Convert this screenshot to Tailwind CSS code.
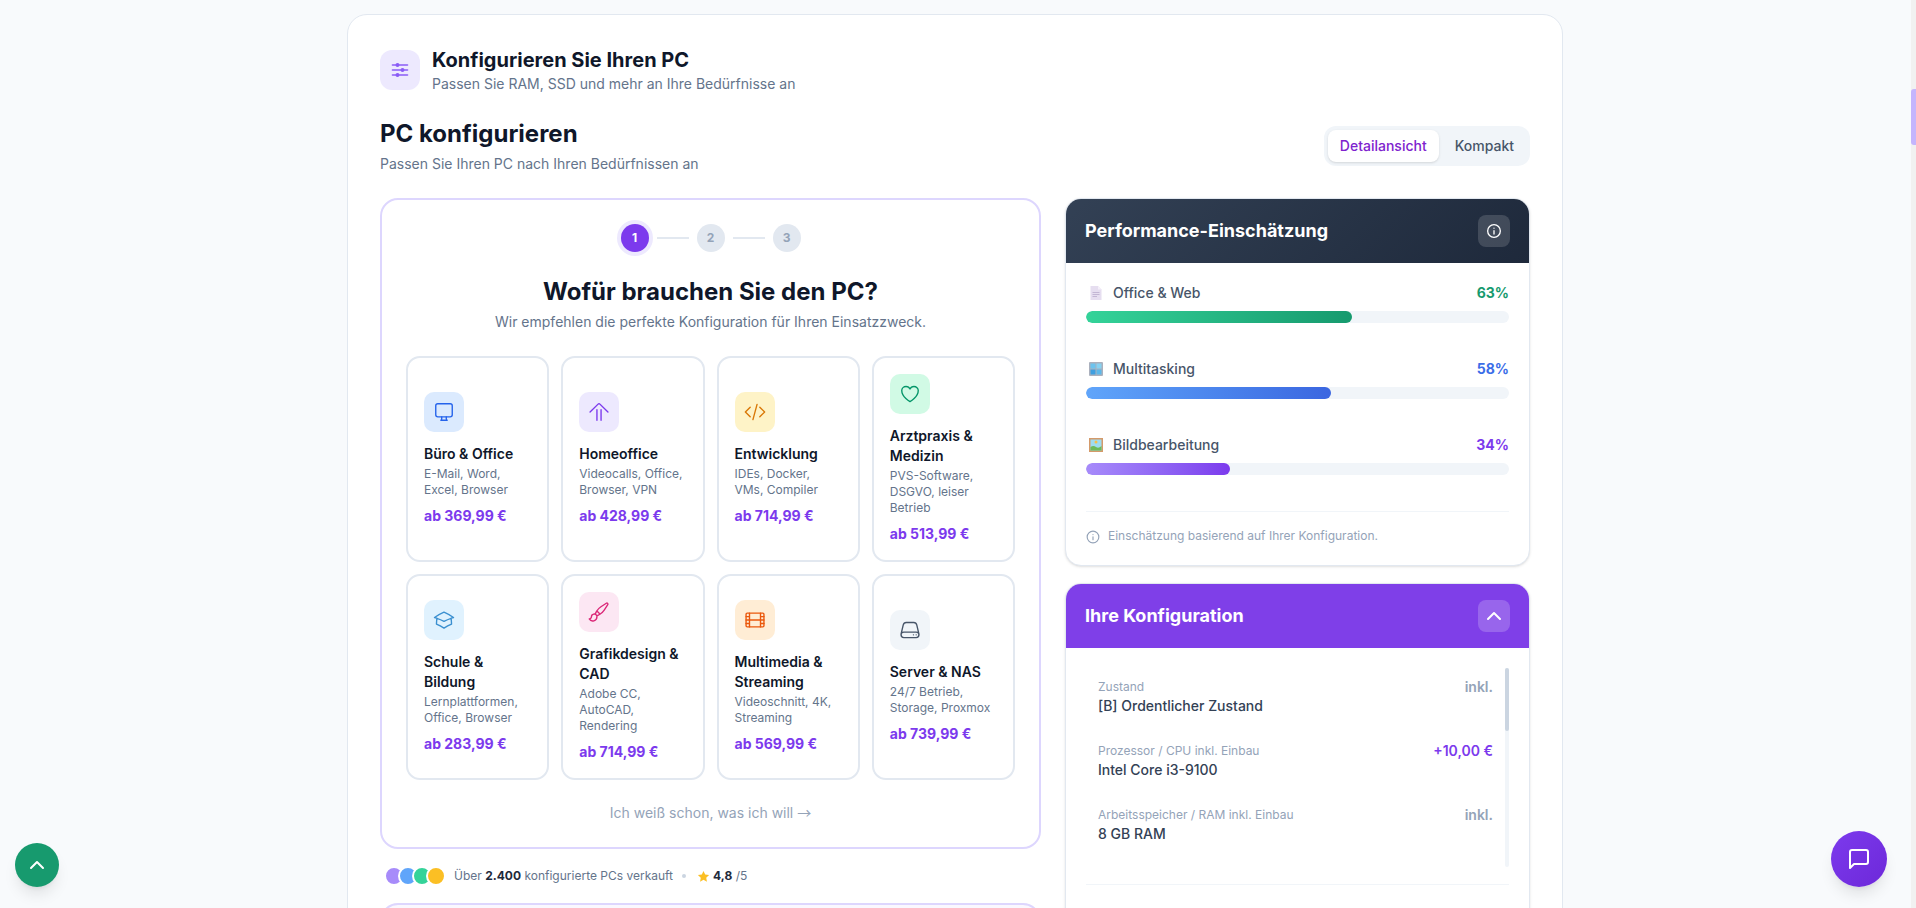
<!DOCTYPE html>
<html lang="de">
<head>
  <meta charset="UTF-8">
  <meta name="viewport" content="width=device-width, initial-scale=1.0">
  <title>PC konfigurieren</title>
  <script src="https://cdn.jsdelivr.net/npm/@tailwindcss/browser@4"></script>
</head>
<body class="bg-[#f8fafc] font-['Inter',sans-serif] text-[#0f172a] h-[908px] overflow-hidden flex">
  <main class="flex-1 min-w-0 h-[908px] overflow-hidden">
    <div class="w-[1216px] ml-[347px] mt-[14px] bg-white border border-[#e2e8f0] rounded-[20px] px-8 pt-8 pb-8">

      <!-- Page header -->
      <div class="flex items-center gap-3 -mt-px">
        <div class="w-10 h-10 rounded-xl bg-[#ede9fe] flex items-center justify-center">
          <svg class="w-5 h-5 text-[#8b5cf6]" viewBox="0 0 24 24" fill="currentColor" stroke="currentColor" stroke-width="2" stroke-linecap="round"><path fill="none" d="M3 6h18M3 12h18M3 18h18"/><circle cx="9" cy="6" r="1.400"/><circle cx="15" cy="12" r="1.400"/><circle cx="9" cy="18" r="1.400"/></svg>
        </div>
        <div>
          <h2 class="text-xl leading-7 font-bold">Konfigurieren Sie Ihren PC</h2>
          <p class="text-sm text-[#64748b]">Passen Sie RAM, SSD und mehr an Ihre Bedürfnisse an</p>
        </div>
      </div>

      <div class="flex items-center justify-between mt-6 mb-6">
        <div>
          <h1 class="text-2xl font-bold">PC konfigurieren</h1>
          <p class="text-sm text-[#64748b] mt-1">Passen Sie Ihren PC nach Ihren Bedürfnissen an</p>
        </div>
        <div class="flex gap-1 p-1 bg-[#f1f5f9] rounded-xl">
          <button class="h-8 px-3 bg-white rounded-lg shadow-sm text-sm font-medium text-[#7e22ce]">Detailansicht</button>
          <button class="h-8 px-3 text-sm font-medium text-[#475569]">Kompakt</button>
        </div>
      </div>

      <div class="flex gap-6 items-start">
        <!-- Left column -->
        <div class="w-[661px] shrink-0">
          <div class="border-2 border-[#ddd6fe] rounded-[18px] bg-white px-6 pt-6 pb-6">
            <div class="flex items-center justify-center gap-2">
              <span class="w-7 h-7 rounded-full bg-[#7c3aed] ring-4 ring-[#ede9fe] text-white text-xs font-bold flex items-center justify-center">1</span>
              <span class="w-8 h-0.5 bg-[#e2e8f0]"></span>
              <span class="w-7 h-7 rounded-full bg-[#e2e8f0] text-[#94a3b8] text-xs font-bold flex items-center justify-center">2</span>
              <span class="w-8 h-0.5 bg-[#e2e8f0]"></span>
              <span class="w-7 h-7 rounded-full bg-[#e2e8f0] text-[#94a3b8] text-xs font-bold flex items-center justify-center">3</span>
            </div>
            <h2 class="text-2xl font-bold text-center mt-6">Wofür brauchen Sie den PC?</h2>
            <p class="text-sm text-[#64748b] text-center mt-1">Wir empfehlen die perfekte Konfiguration für Ihren Einsatzzweck.</p>

            <div class="grid grid-cols-4 gap-3 mt-6">
              <div class="border-2 border-[#e2e8f0] rounded-[14px] p-4 flex flex-col justify-center">
                <div class="w-10 h-10 rounded-[10px] bg-[#dbeafe] flex items-center justify-center mb-3">
                  <svg class="w-[22px] h-[22px] text-[#2563eb]" viewBox="0 0 24 24" fill="none" stroke="currentColor" stroke-width="1.5" stroke-linecap="round" stroke-linejoin="round"><rect x="3" y="3" width="18" height="14.250" rx="2.250"/><path d="M9.500 17.250v2a2 2 0 0 1-1 1.750h7a2 2 0 0 1-1-1.750v-2"/></svg>
                </div>
                <h3 class="text-sm font-semibold">Büro &amp; Office</h3>
                <p class="text-xs text-[#64748b] mt-0.5">E-Mail, Word, Excel, Browser</p>
                <p class="text-sm font-bold text-[#7c3aed] mt-2">ab 369,99 €</p>
              </div>

              <div class="border-2 border-[#e2e8f0] rounded-[14px] p-4 flex flex-col justify-center">
                <div class="w-10 h-10 rounded-[10px] bg-[#ede9fe] flex items-center justify-center mb-3">
                  <svg class="w-[22px] h-[22px] text-[#7c3aed]" viewBox="0 0 24 24" fill="none" stroke="currentColor" stroke-width="1.5" stroke-linecap="round" stroke-linejoin="round"><path d="M2.250 12 11 3.400a1.400 1.400 0 0 1 2 0L21.750 12M9.750 21V9.500M14.250 21V9.500"/></svg>
                </div>
                <h3 class="text-sm font-semibold">Homeoffice</h3>
                <p class="text-xs text-[#64748b] mt-0.5">Videocalls, Office, Browser, VPN</p>
                <p class="text-sm font-bold text-[#7c3aed] mt-2">ab 428,99 €</p>
              </div>

              <div class="border-2 border-[#e2e8f0] rounded-[14px] p-4 flex flex-col justify-center">
                <div class="w-10 h-10 rounded-[10px] bg-[#fef3c7] flex items-center justify-center mb-3">
                  <svg class="w-[22px] h-[22px] text-[#d97706]" viewBox="0 0 24 24" fill="none" stroke="currentColor" stroke-width="1.5" stroke-linecap="round" stroke-linejoin="round"><path d="M17.250 6.750 22.500 12l-5.250 5.250m-10.500 0L1.500 12l5.250-5.250m7.500-3-4.500 16.500"/></svg>
                </div>
                <h3 class="text-sm font-semibold">Entwicklung</h3>
                <p class="text-xs text-[#64748b] mt-0.5">IDEs, Docker, VMs, Compiler</p>
                <p class="text-sm font-bold text-[#7c3aed] mt-2">ab 714,99 €</p>
              </div>

              <div class="border-2 border-[#e2e8f0] rounded-[14px] p-4 flex flex-col justify-center">
                <div class="w-10 h-10 rounded-[10px] bg-[#d1fae5] flex items-center justify-center mb-3">
                  <svg class="w-[22px] h-[22px] text-[#059669]" viewBox="0 0 24 24" fill="none" stroke="currentColor" stroke-width="1.5" stroke-linecap="round" stroke-linejoin="round"><path d="M21 8.250c0-2.485-2.099-4.500-4.688-4.500-1.935 0-3.597 1.126-4.312 2.733-.715-1.607-2.377-2.733-4.313-2.733C5.100 3.750 3 5.765 3 8.250c0 7.220 9 12 9 12s9-4.780 9-12Z"/></svg>
                </div>
                <h3 class="text-sm font-semibold">Arztpraxis &amp; Medizin</h3>
                <p class="text-xs text-[#64748b] mt-0.5">PVS-Software, DSGVO, leiser Betrieb</p>
                <p class="text-sm font-bold text-[#7c3aed] mt-2">ab 513,99 €</p>
              </div>

              <div class="border-2 border-[#e2e8f0] rounded-[14px] p-4 flex flex-col justify-center">
                <div class="w-10 h-10 rounded-[10px] bg-[#e0f2fe] flex items-center justify-center mb-3">
                  <svg class="w-[22px] h-[22px] text-[#3b90d0]" viewBox="0 0 24 24" fill="none" stroke="currentColor" stroke-width="1.5" stroke-linecap="round" stroke-linejoin="round"><path d="M4.260 10.147a60.438 60.438 0 0 0-.491 6.347A48.620 48.620 0 0 1 12 20.904a48.620 48.620 0 0 1 8.232-4.410 60.460 60.460 0 0 0-.491-6.347m-15.482 0a50.636 50.636 0 0 0-2.658-.813A59.906 59.906 0 0 1 12 3.493a59.903 59.903 0 0 1 10.399 5.840c-.896.248-1.783.520-2.658.814m-15.482 0A50.717 50.717 0 0 1 12 13.489a50.702 50.702 0 0 1 7.740-3.342"/></svg>
                </div>
                <h3 class="text-sm font-semibold">Schule &amp; Bildung</h3>
                <p class="text-xs text-[#64748b] mt-0.5">Lernplattformen, Office, Browser</p>
                <p class="text-sm font-bold text-[#7c3aed] mt-2">ab 283,99 €</p>
              </div>

              <div class="border-2 border-[#e2e8f0] rounded-[14px] p-4 flex flex-col justify-center">
                <div class="w-10 h-10 rounded-[10px] bg-[#fce7f3] flex items-center justify-center mb-3">
                  <svg class="w-[22px] h-[22px] text-[#db2777]" viewBox="0 0 24 24" fill="none" stroke="currentColor" stroke-width="1.5" stroke-linecap="round" stroke-linejoin="round"><path d="M9.530 16.122a3 3 0 0 0-5.780 1.128 2.250 2.250 0 0 1-2.400 2.245 4.500 4.500 0 0 0 8.400-2.245c0-.399-.078-.780-.220-1.128Zm0 0a15.998 15.998 0 0 0 3.388-1.620m-5.043-.025a15.994 15.994 0 0 1 1.622-3.395m3.420 3.420a15.995 15.995 0 0 0 4.764-4.648l3.876-5.814a1.151 1.151 0 0 0-1.597-1.597L14.146 6.320a15.996 15.996 0 0 0-4.649 4.763m3.420 3.420a6.776 6.776 0 0 0-3.420-3.420"/></svg>
                </div>
                <h3 class="text-sm font-semibold">Grafikdesign &amp; CAD</h3>
                <p class="text-xs text-[#64748b] mt-0.5">Adobe CC, AutoCAD, Rendering</p>
                <p class="text-sm font-bold text-[#7c3aed] mt-2">ab 714,99 €</p>
              </div>

              <div class="border-2 border-[#e2e8f0] rounded-[14px] p-4 flex flex-col justify-center">
                <div class="w-10 h-10 rounded-[10px] bg-[#ffedd5] flex items-center justify-center mb-3">
                  <svg class="w-[22px] h-[22px] text-[#ea580c]" viewBox="0 0 24 24" fill="none" stroke="currentColor" stroke-width="1.5" stroke-linecap="round" stroke-linejoin="round"><rect x="2.250" y="4.500" width="19.500" height="15" rx="1.200"/><path d="M6 4.500v15M18 4.500v15M6 12h12M2.250 8.250H6M2.250 12H6M2.250 15.750H6M18 8.250h3.750M18 12h3.750M18 15.750h3.750"/></svg>
                </div>
                <h3 class="text-sm font-semibold">Multimedia &amp; Streaming</h3>
                <p class="text-xs text-[#64748b] mt-0.5">Videoschnitt, 4K, Streaming</p>
                <p class="text-sm font-bold text-[#7c3aed] mt-2">ab 569,99 €</p>
              </div>

              <div class="border-2 border-[#e2e8f0] rounded-[14px] p-4 flex flex-col justify-center">
                <div class="w-10 h-10 rounded-[10px] bg-[#f1f5f9] flex items-center justify-center mb-3">
                  <svg class="w-[22px] h-[22px] text-[#475569]" viewBox="0 0 24 24" fill="none" stroke="currentColor" stroke-width="1.5" stroke-linecap="round" stroke-linejoin="round"><path d="M21.750 17.250v-.228a4.500 4.500 0 0 0-.120-1.030l-2.268-9.640a3.375 3.375 0 0 0-3.285-2.602H7.923a3.375 3.375 0 0 0-3.285 2.602l-2.268 9.640a4.500 4.500 0 0 0-.120 1.030v.228m19.500 0a3 3 0 0 1-3 3H5.250a3 3 0 0 1-3-3m19.500 0a3 3 0 0 0-3-3H5.250a3 3 0 0 0-3 3m16.500 0h.008v.008h-.008v-.008Zm-3 0h.008v.008h-.008v-.008Z"/></svg>
                </div>
                <h3 class="text-sm font-semibold">Server &amp; NAS</h3>
                <p class="text-xs text-[#64748b] mt-0.5">24/7 Betrieb, Storage, Proxmox</p>
                <p class="text-sm font-bold text-[#7c3aed] mt-2">ab 739,99 €</p>
              </div>
            </div>

            <p class="h-5 text-sm text-[#94a3b8] text-center mt-[23px]">Ich weiß schon, was ich will <span class="leading-none font-['Noto_Sans_CJK_SC',sans-serif]">→</span></p>
          </div>

          <!-- Social proof -->
          <div class="flex items-center px-1 mt-[17px] h-5 text-xs text-[#64748b]">
            <div class="flex mr-2">
              <span class="w-5 h-5 rounded-full border-2 border-white bg-[#a78bfa]"></span>
              <span class="w-5 h-5 rounded-full border-2 border-white bg-[#60a5fa] -ml-1.5"></span>
              <span class="w-5 h-5 rounded-full border-2 border-white bg-[#34d399] -ml-1.5"></span>
              <span class="w-5 h-5 rounded-full border-2 border-white bg-[#fbbf24] -ml-1.5"></span>
            </div>
            <span>Über <b class="font-bold text-[#1e293b]">2.400</b> konfigurierte PCs verkauft</span>
            <span class="w-1 h-1 rounded-full bg-[#cbd5e1] mx-[9px]"></span>
            <svg class="w-[13px] h-[13px] text-[#fbbf24] mr-[3px] ml-[2px]" viewBox="0 0 20 20" fill="currentColor"><path d="M10 1.500l2.600 5.500 6 .8-4.400 4.200 1.100 6L10 15.100 4.700 18l1.100-6L1.400 7.800l6-.8z"/></svg>
            <span><b class="font-bold text-[#1e293b]">4,8</b> /5</span>
          </div>

          <div class="mt-[17px] h-[120px] border-2 border-[#ddd6fe] rounded-[18px] bg-[#faf8ff]"></div>
        </div>

        <!-- Right column -->
        <div class="flex-1 min-w-0 flex flex-col gap-[17px]">
          <section class="rounded-2xl bg-white border border-[#e2e8f0] shadow-sm overflow-hidden">
            <div class="h-[65px] px-5 flex items-center justify-between bg-linear-135 from-[#334155] to-[#1e293b] -mx-px -mt-px">
              <h3 class="text-lg font-bold text-white">Performance-Einschätzung</h3>
              <span class="w-8 h-8 rounded-lg bg-white/15 flex items-center justify-center">
                <svg class="w-4 h-4 text-white" viewBox="0 0 24 24" fill="none" stroke="currentColor" stroke-width="2" stroke-linecap="round"><circle cx="12" cy="12" r="9.500"/><path d="M12 11.500v5M12 7.700v.1"/></svg>
              </span>
            </div>
            <div class="px-5 pt-5 pb-[21px]">
              <div class="flex flex-col gap-9">
                <div>
                  <div class="flex items-center justify-between mb-2 text-sm">
                    <span class="flex items-center gap-[7px] font-medium text-[#475569]">
                      <svg class="w-5 h-5" viewBox="0 0 20 20"><path fill="#e6def0" d="M4.500 3h7.500l3.500 3.500V17h-11z"/><path fill="#f5f0fa" d="M12 3l3.500 3.500H12z"/><path stroke="#c3b6d4" stroke-width="1" d="M6.500 9.500h7M6.500 11.500h7M6.500 13.500h4.500"/></svg>
                      Office &amp; Web
                    </span>
                    <span class="font-bold text-[#169a6e]">63%</span>
                  </div>
                  <div class="h-3 rounded-full bg-[#f1f5f9] overflow-hidden"><div class="h-full rounded-full bg-gradient-to-r from-[#34d399] to-[#169a6e]" style="width:63%"></div></div>
                </div>
                <div>
                  <div class="flex items-center justify-between mb-2 text-sm">
                    <span class="flex items-center gap-[7px] font-medium text-[#475569]">
                      <svg class="w-5 h-5" viewBox="0 0 20 20"><rect x="3" y="3" width="14" height="14" rx="1" fill="#aab0bd"/><rect x="4.500" y="4.500" width="5" height="5" fill="#6cc3ee"/><rect x="10.500" y="4.500" width="5" height="5" fill="#85d2f2"/><rect x="4.500" y="10.500" width="5" height="5" fill="#3f9fe0"/><rect x="10.500" y="10.500" width="5" height="5" fill="#5cb8ea"/></svg>
                      Multitasking
                    </span>
                    <span class="font-bold text-[#3b6de8]">58%</span>
                  </div>
                  <div class="h-3 rounded-full bg-[#f1f5f9] overflow-hidden"><div class="h-full rounded-full bg-gradient-to-r from-[#60a5fa] to-[#3b66e0]" style="width:58%"></div></div>
                </div>
                <div>
                  <div class="flex items-center justify-between mb-2 text-sm">
                    <span class="flex items-center gap-[7px] font-medium text-[#475569]">
                      <svg class="w-5 h-5" viewBox="0 0 20 20"><rect x="3" y="3" width="14" height="14" fill="#d49a6a"/><rect x="4.500" y="4.500" width="11" height="11" fill="#9fdcf0"/><circle cx="10" cy="7" r="1.500" fill="#f7c04a"/><path fill="#6dbb5a" d="M4.500 15.500v-3.500q3-2 5.500 0t5.500-1v4.500z"/></svg>
                      Bildbearbeitung
                    </span>
                    <span class="font-bold text-[#7c3aed]">34%</span>
                  </div>
                  <div class="h-3 rounded-full bg-[#f1f5f9] overflow-hidden"><div class="h-full rounded-full bg-gradient-to-r from-[#a78bfa] to-[#7c3aed]" style="width:34%"></div></div>
                </div>
              </div>
              <div class="border-t border-[#f1f5f9] mt-9 pt-4 flex items-center gap-2 text-xs text-[#94a3b8]">
                <svg class="w-[14px] h-[14px] mt-0.5" viewBox="0 0 24 24" fill="none" stroke="currentColor" stroke-width="2" stroke-linecap="round"><circle cx="12" cy="12" r="10"/><path d="M12 11.500v5M12 7.700v.1"/></svg>
                <span>Einschätzung basierend auf Ihrer Konfiguration.</span>
              </div>
            </div>
          </section>

          <section class="rounded-2xl bg-white border border-[#e2e8f0] shadow-sm overflow-hidden">
            <div class="h-[65px] px-5 flex items-center justify-between bg-[#7f3fe8] -mx-px -mt-px">
              <h3 class="text-lg font-bold text-white">Ihre Konfiguration</h3>
              <span class="w-8 h-8 rounded-lg bg-white/20 flex items-center justify-center">
                <svg class="w-6 h-6 text-white" viewBox="0 0 24 24" fill="none" stroke="currentColor" stroke-width="2" stroke-linecap="round" stroke-linejoin="round"><path d="m6 15 6-6 6 6"/></svg>
              </span>
            </div>
            <div class="px-5 pt-5">
              <div class="h-[199px] flex">
                <div class="flex-1 pl-3 pr-3 pt-[10px] flex flex-col gap-5">
                  <div class="flex justify-between h-11">
                    <div><p class="text-xs leading-4 text-[#94a3b8] mt-px">Zustand</p><p class="text-sm font-medium leading-5 text-[#334155] mt-px">[B] Ordentlicher Zustand</p></div>
                    <span class="text-sm font-semibold text-[#94a3b8] -mt-px">inkl.</span>
                  </div>
                  <div class="flex justify-between h-11">
                    <div><p class="text-xs leading-4 text-[#94a3b8] mt-px">Prozessor / CPU inkl. Einbau</p><p class="text-sm font-medium leading-5 text-[#334155] mt-px">Intel Core i3-9100</p></div>
                    <span class="text-sm font-semibold text-[#7c3aed] -mt-px">+10,00 €</span>
                  </div>
                  <div class="flex justify-between h-11">
                    <div><p class="text-xs leading-4 text-[#94a3b8] mt-px">Arbeitsspeicher / RAM inkl. Einbau</p><p class="text-sm font-medium leading-5 text-[#334155] mt-px">8 GB RAM</p></div>
                    <span class="text-sm font-semibold text-[#94a3b8] -mt-px">inkl.</span>
                  </div>
                </div>
                <div class="w-1 h-full rounded-full bg-[#f1f5f9]"><div class="h-[63px] rounded-full bg-[#cbd5e1]"></div></div>
              </div>
              <div class="border-t border-[#f1f5f9] mt-[17px] h-24"></div>
            </div>
          </section>
        </div>
      </div>
    </div>
  </main>

  <!-- Custom scrollbar -->
  <div class="w-[5px] h-[908px] bg-[#f1f1f1] shrink-0 pt-[89px]">
    <div class="h-14 bg-[#c4b5fd] rounded-l-[3px]"></div>
  </div>

  <button class="fixed left-[15px] bottom-[21px] w-11 h-11 rounded-full bg-[#179a6e] shadow-lg flex items-center justify-center">
    <svg class="w-6 h-6 text-white" viewBox="0 0 24 24" fill="none" stroke="currentColor" stroke-width="2" stroke-linecap="round" stroke-linejoin="round"><path d="m6 15 6-6 6 6"/></svg>
  </button>
  <button class="fixed left-[1831px] bottom-[21px] w-14 h-14 rounded-full bg-gradient-to-br from-[#7c3aed] to-[#6d28d9] shadow-lg flex items-center justify-center">
    <svg class="w-6 h-6 text-white" viewBox="0 0 24 24" fill="none" stroke="currentColor" stroke-width="2" stroke-linecap="round" stroke-linejoin="round"><path d="M21 15a2 2 0 0 1-2 2H7l-4 4V5a2 2 0 0 1 2-2h14a2 2 0 0 1 2 2z"/></svg>
  </button>
</body>
</html>
